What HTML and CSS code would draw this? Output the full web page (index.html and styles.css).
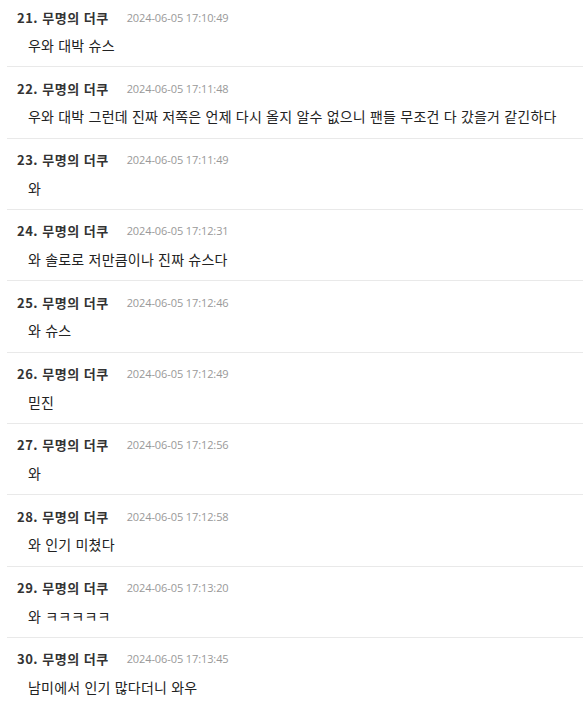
FILE: index.html
```html
<!DOCTYPE html>
<html lang="ko">
<head>
<meta charset="utf-8">
<link rel="stylesheet" href="styles.css">
</head>
<body>
<ul class="comments">
  <li class="comment">
    <div class="meta"><span class="name">21. 무명의 더쿠</span><span class="date">2024-06-05 17:10:49</span></div>
    <p class="text">우와 대박 슈스</p>
  </li>
  <li class="comment">
    <div class="meta"><span class="name">22. 무명의 더쿠</span><span class="date">2024-06-05 17:11:48</span></div>
    <p class="text">우와 대박 그런데 진짜 저쪽은 언제 다시 올지 알수 없으니 팬들 무조건 다 갔을거 같긴하다</p>
  </li>
  <li class="comment">
    <div class="meta"><span class="name">23. 무명의 더쿠</span><span class="date">2024-06-05 17:11:49</span></div>
    <p class="text">와</p>
  </li>
  <li class="comment">
    <div class="meta"><span class="name">24. 무명의 더쿠</span><span class="date">2024-06-05 17:12:31</span></div>
    <p class="text">와 솔로로 저만큼이나 진짜 슈스다</p>
  </li>
  <li class="comment">
    <div class="meta"><span class="name">25. 무명의 더쿠</span><span class="date">2024-06-05 17:12:46</span></div>
    <p class="text">와 슈스</p>
  </li>
  <li class="comment">
    <div class="meta"><span class="name">26. 무명의 더쿠</span><span class="date">2024-06-05 17:12:49</span></div>
    <p class="text">믿진</p>
  </li>
  <li class="comment">
    <div class="meta"><span class="name">27. 무명의 더쿠</span><span class="date">2024-06-05 17:12:56</span></div>
    <p class="text">와</p>
  </li>
  <li class="comment">
    <div class="meta"><span class="name">28. 무명의 더쿠</span><span class="date">2024-06-05 17:12:58</span></div>
    <p class="text">와 인기 미쳤다</p>
  </li>
  <li class="comment">
    <div class="meta"><span class="name">29. 무명의 더쿠</span><span class="date">2024-06-05 17:13:20</span></div>
    <p class="text">와 ㅋㅋㅋㅋㅋ</p>
  </li>
  <li class="comment">
    <div class="meta"><span class="name">30. 무명의 더쿠</span><span class="date">2024-06-05 17:13:45</span></div>
    <p class="text">남미에서 인기 많다더니 와우</p>
  </li>
</ul>
</body>
</html>
```
FILE: styles.css
```css
html, body {
  margin: 0;
  padding: 0;
  background: #fff;
}
body {
  font-family: "Noto Sans CJK KR", "Noto Sans", sans-serif;
  color: #222;
  overflow: hidden;
}
.comments {
  list-style: none;
  margin: -4px 0 0 7px;
  padding: 0;
}
.comment {
  border-bottom: 1px solid #e9e9e9;
  padding: 11px 0 11.33px;
}
.meta {
  display: flex;
  align-items: center;
  padding-left: 10px;
  height: 20px;
}
.name {
  font-size: 13px;
  font-weight: 700;
  letter-spacing: 0.5px;
  color: #333;
}
.date {
  font-family: "Open Sans", "Noto Sans", sans-serif;
  font-size: 11px;
  letter-spacing: -0.1px;
  color: #999;
  margin-left: 18px;
}
.text {
  margin: 8px 0 0;
  padding-left: 21px;
  font-size: 14px;
  letter-spacing: 0.2px;
  line-height: 20px;
  color: #222;
}
```
